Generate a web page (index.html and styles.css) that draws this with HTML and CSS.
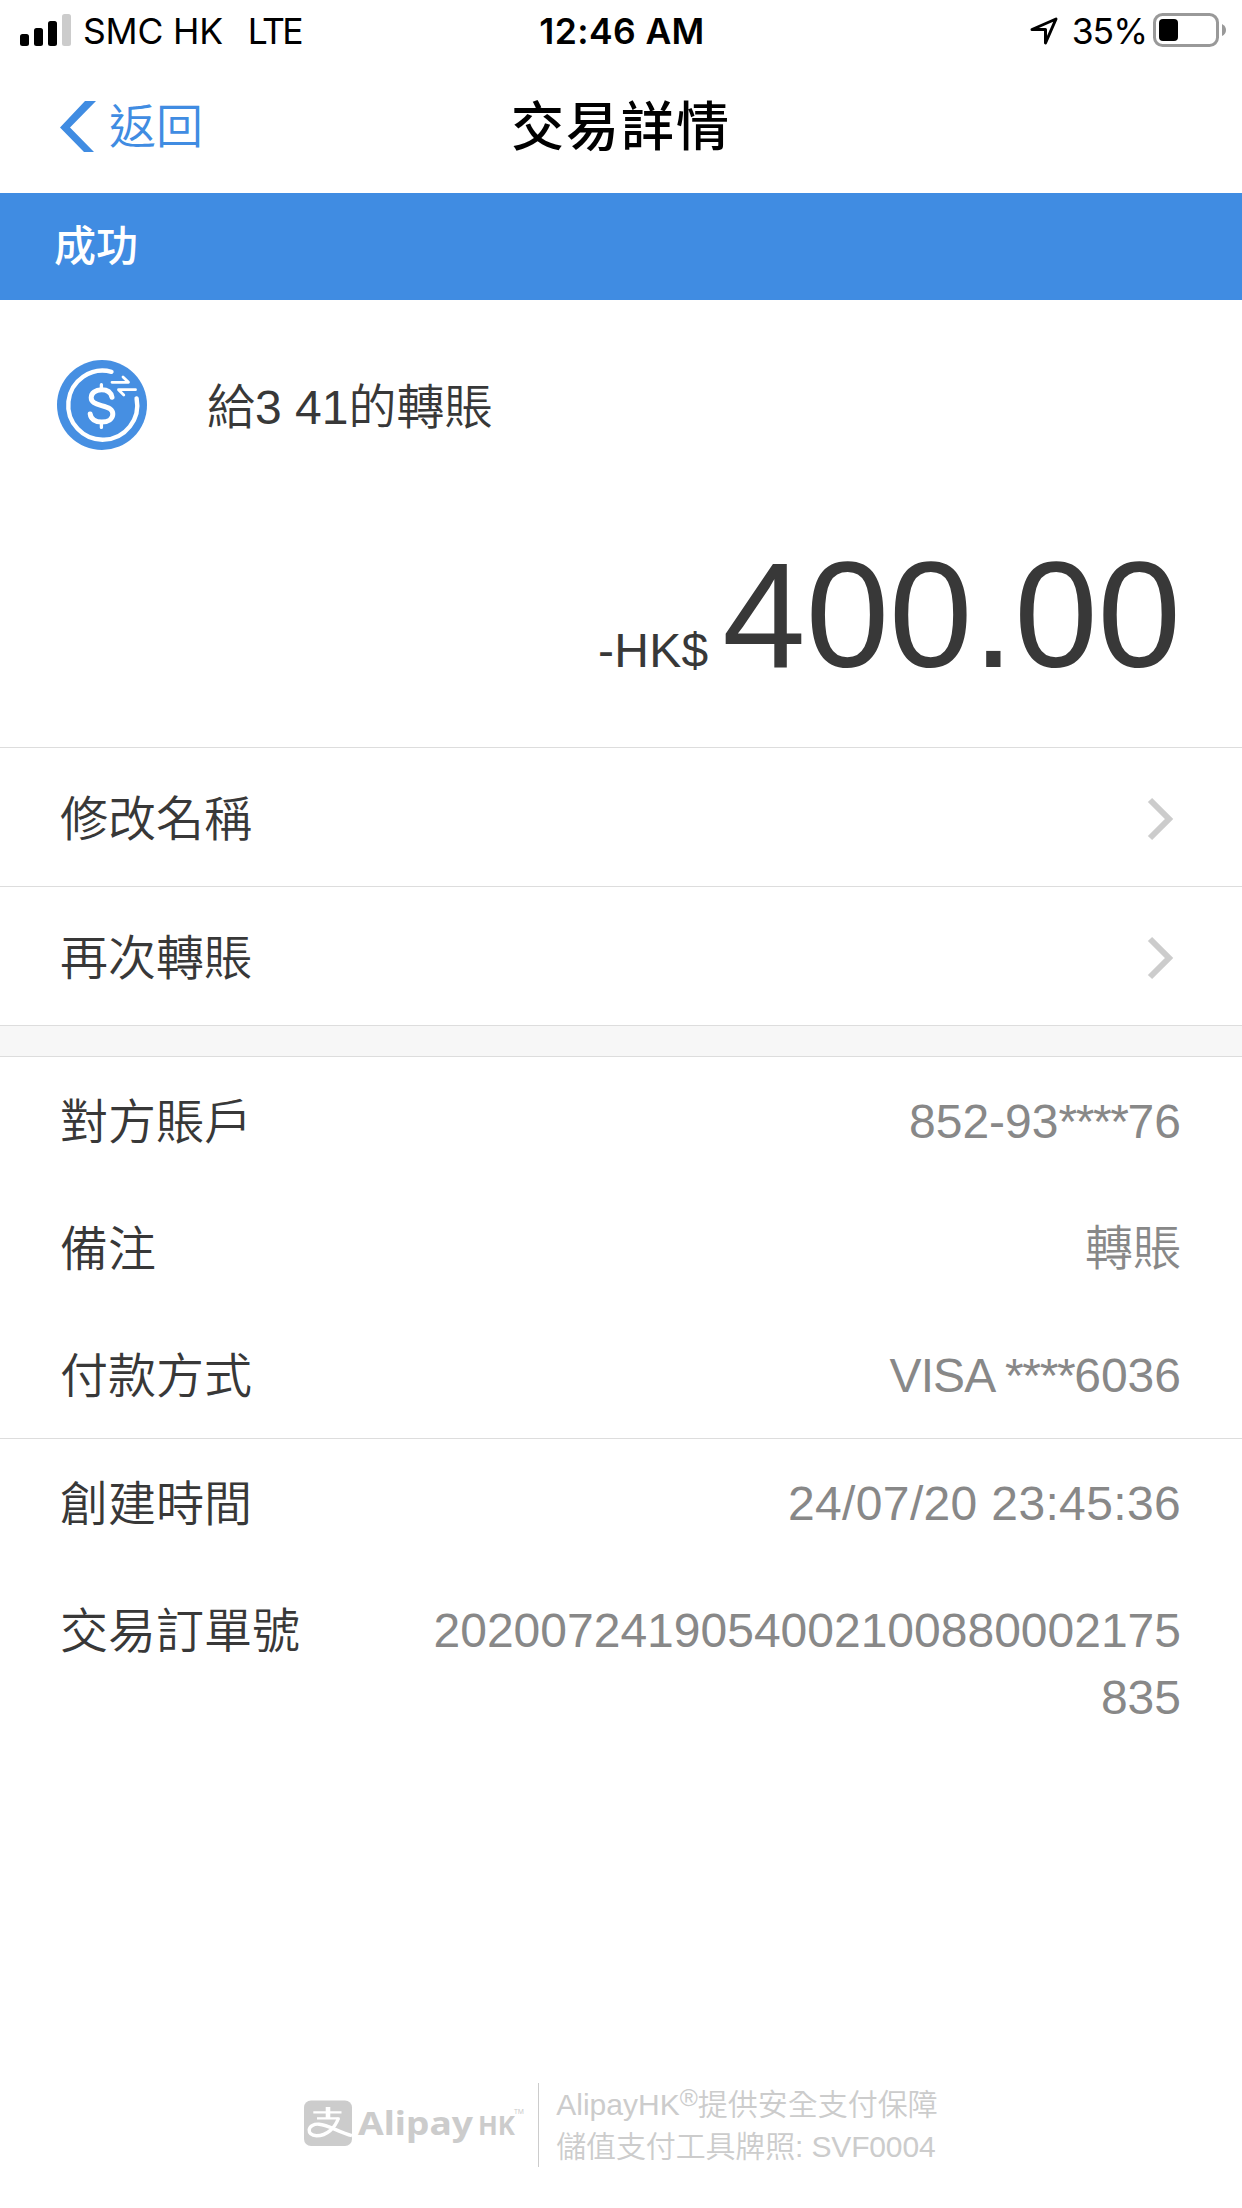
FILE: index.html
```html
<!DOCTYPE html>
<html lang="zh-Hant-HK">
<head>
    <meta charset="UTF-8">
    <meta name="viewport" content="width=device-width, initial-scale=1.0">
    <title>交易詳情</title>
    <link rel="stylesheet" href="styles.css">
</head>
<body>

    <!-- Status bar -->
    <div class="status-bar">
        <div class="status-left">
            <svg class="signal" width="51" height="32" viewBox="0 0 51 32">
                <rect x="0" y="20" width="9" height="12" rx="2.5"/>
                <rect x="14" y="14" width="9" height="18" rx="2.5"/>
                <rect x="28" y="7" width="9" height="25" rx="2.5"/>
                <rect x="42" y="0" width="9" height="32" rx="2.5" fill="#ccc"/>
            </svg>
            <span class="carrier">SMC HK</span>
            <span class="network">LTE</span>
        </div>
        <span class="clock">12:46 AM</span>
        <div class="status-right">
            <svg class="location" width="28" height="28" viewBox="0 0 28 28">
                <path d="M2 12.5 L26 2 L15.5 26 V12.5 Z" fill="none" stroke="#000" stroke-width="3" stroke-linejoin="round"/>
            </svg>
            <span class="percent">35%</span>
            <svg class="battery" width="74" height="34" viewBox="0 0 74 34">
                <rect x="1.5" y="1.5" width="63" height="31" rx="8" fill="none" stroke="#999" stroke-width="3"/>
                <rect x="6" y="6" width="19" height="22" rx="4"/>
                <path d="M69 11 Q73 13 73 17 Q73 21 69 23 Z" fill="#999"/>
            </svg>
        </div>
    </div>

    <!-- Navigation -->
    <div class="nav">
        <a class="back">
            <svg width="36" height="51" viewBox="0 0 36 51">
                <path d="M25 0 H36 L10 26.5 L34 51 H24 L0 26.5 Z" fill="#408ce2"/>
            </svg>
            <span>返回</span>
        </a>
        <h1 class="nav-title">交易詳情</h1>
    </div>

    <div class="banner">成功</div>

    <!-- Summary -->
    <div class="summary">
        <div class="payee">
            <svg width="90" height="90" viewBox="0 0 90 90">
                <circle cx="45" cy="45" r="45" fill="#468fe2"/>
                <g fill="none" stroke="#fff" stroke-linecap="round" stroke-linejoin="round">
                    <path d="M54.5 11.8 A34.5 34.5 0 1 0 79.6 38.5" stroke-width="4.4"/>
                    <path d="M55 37.3 C54 32.5 50 29.8 44.5 29.8 C38.5 29.8 34.2 33 34.2 37.6 C34.2 42 37.5 43.8 44.5 45.6 C52 47.5 55.8 49.3 55.8 54 C55.8 59 51 62 44.8 62 C38 62 33.8 59 33.2 54" stroke-width="5"/>
                    <path d="M44.4 24.7 V30 M44.4 62 V67.4" stroke-width="3.3"/>
                    <path d="M55 22.3 H71.5 L66 17 M78.5 29.7 H61.5 L66.8 35" stroke-width="2.8"/>
                </g>
            </svg>
            <span class="payee-name">給3 41的轉賬</span>
        </div>
        <div class="amount"><span class="currency">-HK$ </span>400.00</div>
    </div>

    <!-- Actions -->
    <div class="action">
        <span>修改名稱</span>
        <svg width="27" height="44" viewBox="0 0 27 44">
            <path d="M3 3 L22 22 L3 41" fill="none" stroke="#ccc" stroke-width="6"/>
        </svg>
    </div>
    <div class="action">
        <span>再次轉賬</span>
        <svg width="27" height="44" viewBox="0 0 27 44">
            <path d="M3 3 L22 22 L3 41" fill="none" stroke="#ccc" stroke-width="6"/>
        </svg>
    </div>
    <div class="gap"></div>

    <!-- Details -->
    <div class="details">
        <div class="row">
            <span class="label">對方賬戶</span>
            <span class="value">852-93<span class="mask">****</span>76</span>
        </div>
        <div class="row">
            <span class="label">備注</span>
            <span class="value">轉賬</span>
        </div>
        <div class="row">
            <span class="label">付款方式</span>
            <span class="value"><span class="card">VISA </span><span class="mask">****</span>6036</span>
        </div>
    </div>
    <div class="details">
        <div class="row">
            <span class="label">創建時間</span>
            <span class="value time">24/07/20 23:45:36</span>
        </div>
        <div class="row">
            <span class="label">交易訂單號</span>
            <span class="value">2020072419054002100880002175835</span>
        </div>
    </div>

    <!-- Footer -->
    <div class="footer">
        <svg class="logo" width="222" height="50" viewBox="0 0 222 50">
            <rect x="0" y="0.5" width="48" height="45.5" rx="7" fill="#ccc"/>
            <g fill="none" stroke="#fff">
                <path d="M24 7 V18" stroke-width="4.6"/>
                <path d="M9.3 12.4 H37.5 M13 18.4 H35.5" stroke-width="2.4"/>
                <path d="M34.5 18 C31 28 23 35.7 12.5 35.7 C7 35.7 5 32.5 5.2 29.8 C5.6 26 10 23.8 15 24.2 C25 25 35 32.5 48 35.6" stroke-width="3.4"/>
            </g>
            <g class="logo-text">
                <text x="54" y="34.5" font-size="33" textLength="115" lengthAdjust="spacingAndGlyphs">Alipay</text>
                <text x="174" y="34.5" font-size="26" textLength="37" lengthAdjust="spacingAndGlyphs">HK</text>
                <text class="tm" x="210" y="14" font-size="7.5" textLength="10" lengthAdjust="spacingAndGlyphs">TM</text>
            </g>
        </svg>
        <div class="licence">
            <p>AlipayHK<span class="reg">®</span>提供安全支付保障</p>
            <p class="number">儲值支付工具牌照: SVF0004</p>
        </div>
    </div>

</body>
</html>
```
FILE: styles.css
```css
* {
    box-sizing: border-box;
}
body {
    margin: 0;
    height: 2208px;
    display: flex;
    flex-direction: column;
    font-family: "Liberation Sans", "Noto Sans CJK TC", sans-serif;
    font-size: 48px;
    font-weight: 350;
    color: #383838;
    background-color: #fff;
}

/* Status bar */
.status-bar {
    height: 62px;
    display: grid;
    grid-template-columns: 1fr auto 1fr;
    align-items: center;
    padding: 2px 15px 0 20px;
    font-family: Inter, sans-serif;
    font-size: 35.5px;
    font-weight: 400;
    line-height: 60px;
    color: #000;
}
.status-left,
.status-right {
    display: flex;
    align-items: center;
}
.status-right {
    justify-content: flex-end;
}
.signal {
    margin: -4px 12px 0 0;
}
.carrier {
    letter-spacing: -0.2px;
}
.network {
    margin-left: 25px;
    letter-spacing: -2.5px;
}
.clock {
    font-weight: 600;
    letter-spacing: 0.4px;
    padding-right: 3px;
}
.location {
    margin: -3px 14px 0 0;
}
.percent {
    margin-right: 6px;
    letter-spacing: -1px;
}
.battery {
    margin-top: -4px;
}

/* Navigation */
.nav {
    height: 131px;
    display: grid;
    grid-template-columns: 1fr auto 1fr;
    align-items: center;
    padding: 0 60px;
}
.back {
    display: flex;
    align-items: center;
    gap: 13px;
    font-size: 47px;
    line-height: 66px;
    margin-top: -2px;
    color: #408ce2;
}
.nav-title {
    margin: 0;
    font-size: 53px;
    font-weight: 500;
    letter-spacing: 2px;
    line-height: 70px;
    color: #000;
}
.banner {
    height: 107px;
    padding-left: 54px;
    background-color: #408ce2;
    color: #fff;
    font-size: 42px;
    font-weight: 500;
    line-height: 108px;
}

/* Summary */
.summary {
    height: 448px;
    padding: 60px 61px 0 57px;
    border-bottom: 1px solid #ddd;
}
.payee {
    display: flex;
    align-items: center;
    gap: 60px;
    height: 90px;
}
.payee-name {
    padding-bottom: 5px;
}
.amount {
    margin-top: 75px;
    text-align: right;
    font-size: 150px;
    line-height: 180px;
}
.currency {
    font-size: 48px;
    letter-spacing: 0.3px;
}

/* Actions */
.action {
    height: 139px;
    display: flex;
    align-items: center;
    justify-content: space-between;
    padding: 0 68px 0 60px;
    border-bottom: 1px solid #ddd;
}
.action span {
    padding-bottom: 4px;
}
.action svg {
    margin-top: 4px;
}
.gap {
    height: 31px;
    background-color: #f7f7f7;
    border-bottom: 1px solid #ddd;
}

/* Details */
.details + .details {
    border-top: 1px solid #ddd;
}
.row {
    display: flex;
    justify-content: space-between;
    padding: 31px 61px 29px 60px;
    line-height: 67px;
}
.label {
    margin: 1px 0 -1px;
}
.value {
    width: 750px;
    text-align: right;
    color: #888;
    word-break: break-all;
}
.mask {
    letter-spacing: -1.4px;
}
.card {
    letter-spacing: -0.9px;
}
.time {
    letter-spacing: 0.35px;
}

/* Footer */
.footer {
    display: flex;
    justify-content: center;
    align-items: center;
    height: 84px;
    margin: auto 0 41px;
    color: #ccc;
}
.logo {
    margin-right: 12px;
}
.logo-text {
    fill: #ccc;
    font-family: "Noto Sans", sans-serif;
    font-weight: 700;
}
.tm {
    font-weight: 400;
}
.licence {
    height: 84px;
    padding: 1px 0 0 17px;
    border-left: 1px solid #ccc;
    font-size: 30px;
    line-height: 42px;
}
.licence p {
    margin: 0;
    height: 42px;
}
.licence .number {
    letter-spacing: -0.15px;
}
.reg {
    font-size: 24.5px;
    line-height: 0;
    vertical-align: 9px;
}
```
